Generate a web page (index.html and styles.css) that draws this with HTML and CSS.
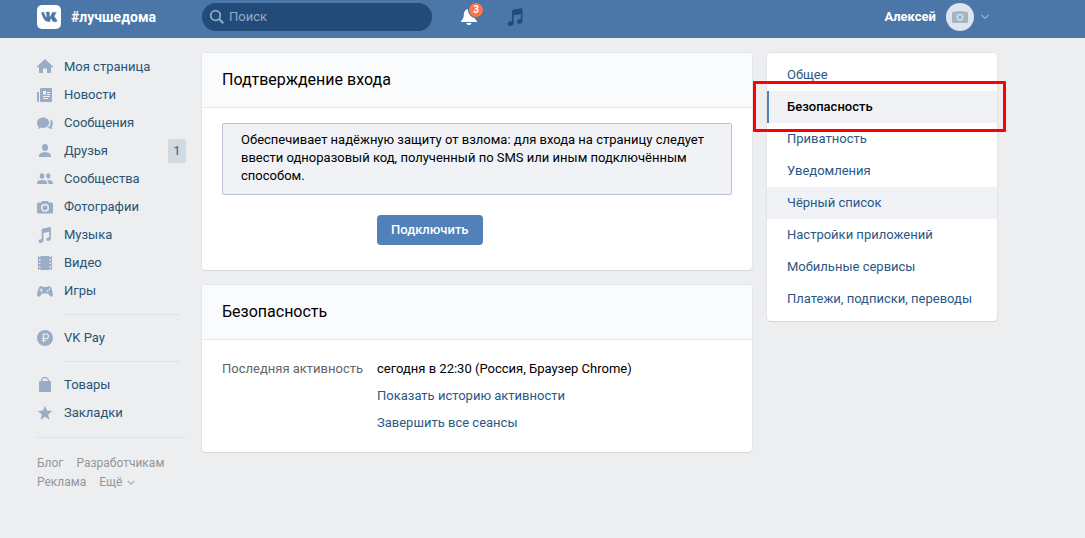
FILE: index.html
```html
<!DOCTYPE html>
<html lang="ru">
<head>
<meta charset="utf-8">
<title>Безопасность</title>
<link rel="stylesheet" href="styles.css">
</head>
<body>
<header class="topbar">
  <a class="brand" href="#">
    <svg class="logo" viewBox="0 0 24 24" aria-hidden="true"><rect width="24" height="24" rx="5" fill="#fff"/><path fill="#4a76a8" stroke="#4a76a8" stroke-width=".5" d="M11.3 17h1.1s.4 0 .5-.3c.2-.2.1-.7.1-.7s0-2 .9-2.300c.9-.3 2 2 3.200 2.800.9.600 1.600.500 1.600.500h3.100s1.600-.1.800-1.400c-.1-.1-.5-1-2.400-2.700-2-1.900-1.700-1.600.7-4.700C22.300 6.300 23 7 19.900 7h-3.300s-.3 0-.5.1c-.2.100-.3.400-.3.400s-.5 1.300-1.200 2.400c-1.400 2.400-2 2.500-2.200 2.300-.500-.3-.4-1.300-.4-2.100 0-2.300.3-3.200-.7-3.400-.3-.1-.6-.1-1.400-.1-1.100 0-2 0-2.500.3-.4.200-.600.500-.4.600.2 0 .6.100.900.500.3.400.3 1.400.3 1.400s.2 2.700-.4 3c-.400.200-1-.2-2.200-2.400C5 8.900 4.500 7.600 4.500 7.600s-.1-.2-.3-.4C4 7.100 3.700 7 3.700 7H1.300s-.5 0-.6.200c-.2.200 0 .500 0 .500s2.300 5.100 4.800 7.600C7.800 17.200 11.300 17 11.300 17z" transform="matrix(.7 0 0 .92 4 1)"/></svg>
    <span>#лучшедома</span>
  </a>
  <div class="topbar-main">
    <label class="search">
      <svg viewBox="0 0 16 16" aria-hidden="true"><circle cx="6.500" cy="6.500" r="4.800" fill="none" stroke="#8fadc8" stroke-width="1.800"/><path d="M10 10l4.300 4.300" stroke="#8fadc8" stroke-width="2"/></svg>
      <input type="search" placeholder="Поиск" aria-label="Поиск">
    </label>
    <button class="top-btn bell" aria-label="Уведомления">
      <svg viewBox="0 0 18 18" aria-hidden="true"><path fill="#fff" d="M8 1c-3 .5-4 3-4.200 6C3.700 9.500 3 11 1.200 12.800V14h15.600v-1.200C14.800 11.200 14 9.500 14 7 13.500 4 12 1 8 1zM6.300 15h5.200c-.5 1.400-1.400 2-2.600 2s-2.100-.6-2.600-2z"/></svg>
      <span class="count">3</span>
    </button>
    <button class="top-btn" aria-label="Музыка">
      <svg viewBox="0 0 18 18" aria-hidden="true"><path fill="#224b7a" d="M6 2.800c0-.6.400-1 1-1.100L15.500.3c.600-.1 1 .2 1 .8v11.300c0 2-1.300 3.400-3.200 3.400-1.500 0-2.400-.8-2.400-2 0-1.500 1.100-2.500 2.900-2.600h1V6L7.700 7.200v7.200c0 2-1.400 3.500-3.400 3.500-1.500 0-2.500-.8-2.500-2 0-1.500 1.200-2.500 2.900-2.600H6z"/></svg>
    </button>
  </div>
  <button class="profile">
    <span>Алексей</span>
    <svg class="avatar" viewBox="0 0 28 28" aria-hidden="true"><circle cx="14" cy="14" r="14" fill="#dfe5ed"/><path fill="#a3b5c8" d="M7 8.800h3L11 8h6l1 .8h3a1 1 0 0 1 1 1V19a1 1 0 0 1-1 1H7a1 1 0 0 1-1-1V9.800a1 1 0 0 1 1-1z"/><circle cx="14" cy="14.300" r="2.800" fill="none" stroke="#dfe5ed" stroke-width="1.200"/></svg>
    <svg class="chevron" viewBox="0 0 8 6" aria-hidden="true"><path d="M.5 1L4 4.300 7.500 1" fill="none" stroke="#8fadc8" stroke-width="1.400"/></svg>
  </button>
</header>

<div class="page">
  <nav class="sidebar" aria-label="Меню">
    <a class="nav-item" href="#"><svg viewBox="0 0 16 16"><path d="M8 0l8 7.500v.8h-2v5.200a.5.500 0 0 1-.5.500H10V9.500H6V14H2.500a.5.500 0 0 1-.5-.5V8.300H0v-.8z"/></svg>Моя страница</a>
    <a class="nav-item" href="#"><svg viewBox="0 0 16 16"><path fill-rule="evenodd" d="M4 1h10a1 1 0 0 1 1 1v12a1 1 0 0 1-1 1H4a1 1 0 0 1-1-1V2a1 1 0 0 1 1-1zM6 4v3.500h3V4zm4 1v1h3V5zm0 2v1h3V7zM6 9v1h7V9zm0 2v1h5v-1zM0 5h2v10H1a1 1 0 0 1-1-1z"/></svg>Новости</a>
    <a class="nav-item" href="#"><svg viewBox="0 0 16 16"><path d="M6 2.500c3.500 0 6.200 2.300 6.200 5.200S9.500 12.900 6 12.900c-.9 0-1.700-.1-2.400-.4-.7.900-1.600 1.300-2.900 1.300.6-.7.900-1.600.9-2.400C.6 10.600 0 9.200 0 7.700c0-2.900 2.500-5.200 6-5.200zM13 4.200c1.800.8 3 2.200 3 4 0 1.300-.5 2.500-1.400 3.300 0 .900.300 1.700.8 2.400-1.200 0-2-.4-2.700-1-.8.300-1.700.4-2.700.2 2.300-1 3.500-2.900 3.500-5.200 0-1.300-.2-2.600-.5-3.700z"/></svg>Сообщения</a>
    <a class="nav-item" href="#"><svg viewBox="0 0 16 16"><ellipse cx="8" cy="4.500" rx="3" ry="3.500"/><path d="M2 13.500c0-3 2.200-4.200 6-4.200s6 1.200 6 4.200a.6.600 0 0 1-.6.500H2.600a.6.600 0 0 1-.6-.5z"/></svg>Друзья<span class="badge">1</span></a>
    <a class="nav-item" href="#"><svg viewBox="0 0 16 16"><ellipse cx="5" cy="5" rx="2.300" ry="2.800"/><ellipse cx="11.300" cy="5" rx="2.100" ry="2.700"/><path d="M0 12.500C0 9.800 1.800 9 5 9s5.200.8 5.200 3.500v.5H0zM9.700 9c3.800-.4 6.300.3 6.300 3.500v.5h-4.500c0-2-.4-3.200-1.800-4z"/></svg>Сообщества</a>
    <a class="nav-item" href="#"><svg viewBox="0 0 16 16"><path fill-rule="evenodd" d="M1.500 3.500H4L5.300 2h5.400L12 3.500h2.500A1.500 1.500 0 0 1 16 5v8a1.500 1.500 0 0 1-1.500 1.500h-13A1.500 1.500 0 0 1 0 13V5a1.500 1.500 0 0 1 1.500-1.500zM8 4.800a4 4 0 1 0 0 8 4 4 0 0 0 0-8zm0 1.500a2.500 2.500 0 1 1 0 5 2.500 2.500 0 0 1 0-5z"/></svg>Фотографии</a>
    <a class="nav-item" href="#"><svg viewBox="0 0 16 16"><path d="M4.700 2.600c0-.5.300-.8.800-.9L13 .1c.5-.1.900.1.900.6v10.600c0 1.700-1 2.700-2.600 2.700-1.200 0-1.900-.6-1.900-1.600 0-1.200.9-2 2.300-2.100h.5V4.700L6.500 6v7.300c0 1.700-1.100 2.700-2.800 2.700-1.300 0-2.200-.6-2.200-1.700 0-1.200.9-1.900 2.300-2h.9z"/></svg>Музыка</a>
    <a class="nav-item" href="#"><svg viewBox="0 0 16 16"><path fill-rule="evenodd" d="M1 1h1v1h1.500V1h9v1H14V1h1v14h-1v-1h-1.500v1h-9v-1H2v1H1zm1 3v1.500h1.500V4zm0 3.500V9h1.500V7.500zM2 11v1.500h1.500V11zm10.500-7v1.500H14V4zm0 3.500V9H14V7.500zm0 3.500v1.500H14V11z"/></svg>Видео</a>
    <a class="nav-item" href="#"><svg viewBox="0 0 16 16"><path fill-rule="evenodd" d="M4 3c1 0 1.500 1 2.300 1h3.400C10.500 4 11 3 12 3c2.200 0 3.200 4 3.900 8.500.3 2-1.600 3.200-3 1.500L11 10.500H5L3.100 13C1.700 14.700-.2 13.500.1 11.500.8 7 1.800 3 4 3zm-.3 2.500v1H2.500v1h1.200v1.200h1V7.500H6v-1H4.700v-1zm8.500.1a.8.800 0 1 0 0 1.600.8.800 0 0 0 0-1.600zm-1.700 1.700a.8.800 0 1 0 0 1.600.8.800 0 0 0 0-1.600z"/></svg>Игры</a>
    <hr class="nav-rule">
    <a class="nav-item" href="#"><svg viewBox="0 0 16 16"><circle cx="8" cy="8" r="8"/><path d="M6.500 12.500V4h2.700a2.200 2.200 0 0 1 0 4.500H5M5 10.500h4.500" fill="none" stroke="#edeef0" stroke-width="1.200"/></svg>VK Pay</a>
    <hr class="nav-rule">
    <a class="nav-item" href="#"><svg viewBox="0 0 16 16"><path d="M3 4h10a1 1 0 0 1 1 1v9a1 1 0 0 1-1 1H3a1 1 0 0 1-1-1V5a1 1 0 0 1 1-1z"/><path d="M4.500 5V4a3.500 3.500 0 0 1 7 0v1" fill="none" stroke="#99aec6" stroke-width="1.300"/></svg>Товары</a>
    <a class="nav-item" href="#"><svg viewBox="0 0 16 16"><path d="M8 .7l2 4.900 5.200.4-4 3.400 1.300 5.300L8 11.800l-4.500 2.900 1.300-5.300L.8 6 6 5.600z"/></svg>Закладки</a>
    <div class="nav-footer">
      <a href="#">Блог</a><a href="#">Разработчикам</a><a href="#">Реклама</a><a href="#">Ещё <svg class="more" viewBox="0 0 8 6"><path d="M.8 1L4 4.200 7.200 1" fill="none" stroke="#adb2b8" stroke-width="1.300"/></svg></a>
    </div>
  </nav>

  <main class="content">
    <section class="card">
      <h2 class="card-title">Подтверждение входа</h2>
      <div class="confirm">
        <p class="notice">Обеспечивает надёжную защиту от взлома: для входа на страницу следует ввести одноразовый код, полученный по SMS или иным подключённым способом.</p>
        <button class="primary">Подключить</button>
      </div>
    </section>
    <section class="card">
      <h2 class="card-title">Безопасность</h2>
      <dl class="activity">
        <dt>Последняя активность</dt>
        <dd>сегодня в 22:30 (Россия, Браузер Chrome)</dd>
        <dd><a href="#">Показать историю активности</a></dd>
        <dd><a href="#">Завершить все сеансы</a></dd>
      </dl>
    </section>
  </main>

  <nav class="card settings" aria-label="Настройки">
    <a href="#">Общее</a>
    <a class="current" href="#" aria-current="page">Безопасность</a>
    <a href="#">Приватность</a>
    <a href="#">Уведомления</a>
    <a class="hovered" href="#">Чёрный список</a>
    <a href="#">Настройки приложений</a>
    <a href="#">Мобильные сервисы</a>
    <a href="#">Платежи, подписки, переводы</a>
  </nav>
</div>
</body>
</html>
```

FILE: styles.css
```css
* { box-sizing: border-box; }
body {
  margin: 0;
  background: #edeef0;
  color: #000;
  font: 13px/18px Roboto, "Open Sans", sans-serif;
}
a { color: #2a5885; text-decoration: none; }
button, input { font: inherit; border: 0; padding: 0; background: none; }
button { cursor: pointer; }
svg { display: block; flex: none; }

.topbar {
  display: flex;
  align-items: center;
  height: 38px;
  padding: 0 96px 4px 37px;
  background: #4a76a8;
  border-bottom: 1px solid #4571a3;
}
.brand {
  display: flex;
  align-items: center;
  gap: 10px;
  width: 165px;
  color: #fff;
  font-size: 14px;
  font-weight: 700;
}
.logo { width: 24px; height: 24px; }
.topbar-main { display: flex; flex: 1; align-items: center; }
.search {
  display: flex;
  align-items: center;
  gap: 4px;
  width: 230px;
  height: 28px;
  padding: 0 7px;
  border-radius: 14px;
  background: #224b7a;
}
.search svg { width: 16px; height: 16px; }
.search input { flex: 1; min-width: 0; color: #fff; outline: 0; }
.search input::placeholder { color: #8fadc8; opacity: 1; }
.top-btn { position: relative; margin-left: 28px; }
.top-btn svg { width: 18px; height: 18px; }
.count {
  position: absolute;
  top: -5px;
  right: -5px;
  width: 14px;
  height: 14px;
  border-radius: 7px;
  box-shadow: 0 0 0 1px #4a76a8;
  background: #ff734c;
  color: #fff;
  font: 700 10px/14px Roboto, sans-serif;
  text-align: center;
}
.profile {
  display: flex;
  align-items: center;
  gap: 10px;
  color: #fff;
  font-weight: 700;
}
.avatar { width: 28px; height: 28px; }
.chevron { width: 8px; height: 6px; margin-left: -3px; }

.page {
  display: flex;
  align-items: flex-start;
  gap: 15px;
  padding: 15px 88px 15px 37px;
}
.sidebar { width: 150px; flex: none; }
.nav-item {
  display: flex;
  align-items: center;
  gap: 11px;
  height: 28px;
  color: #285473;
}
.nav-item svg { width: 16px; height: 16px; fill: #99aec6; }
.badge {
  min-width: 18px;
  margin: 0 1px 0 auto;
  border-radius: 2px;
  background: #d1d9e1;
  color: #55677d;
  font-size: 12px;
  font-weight: 500;
  line-height: 24px;
  text-align: center;
}
.nav-rule {
  height: 1px;
  margin: 9px 7px 9px 27px;
  border: 0;
  background: #dfe1e8;
}
.nav-footer {
  display: flex;
  flex-wrap: wrap;
  column-gap: 13px;
  margin: 10px 1px 0 0;
  padding-top: 16px;
  border-top: 1px solid #dfe1e5;
  font-size: 12px;
  line-height: 19px;
}
.nav-footer a { color: #939699; }
.more { display: inline-block; width: 8px; height: 6px; margin-left: 2px; }

.content { display: grid; flex: 1; gap: 15px; min-width: 0; }
.card {
  border-radius: 4px;
  background: #fff;
  box-shadow: 0 1px 0 0 #d7d8db, 0 0 0 1px #e3e4e8;
}
.card-title {
  margin: 0;
  padding: 0 20px;
  border-bottom: 1px solid #e7e8ec;
  border-radius: 4px 4px 0 0;
  background: #fafbfc;
  font-size: 16px;
  font-weight: 400;
  line-height: 54px;
}
.confirm { padding: 15px 20px 25px; }
.notice {
  margin: 0 0 20px;
  padding: 7px 18px 9px;
  border: 1px solid #bac3d4;
  border-radius: 2px;
  background: #f0f2f5;
}
.primary {
  display: block;
  height: 30px;
  margin-left: 155px;
  padding: 0 14px;
  border-radius: 4px;
  background: #5181b8;
  color: #fff;
  font-weight: 500;
}
.activity {
  display: grid;
  grid-template-columns: 155px 1fr;
  row-gap: 9px;
  margin: 0;
  padding: 20px;
}
.activity dt { color: #656565; }
.activity dd { grid-column: 2; margin: 0; }

.settings { width: 230px; flex: none; padding: 6px 0; }
.settings a { display: block; padding: 0 20px; line-height: 32px; }
.settings .hovered { background: #f0f2f5; }
.settings .current {
  position: relative;
  padding-left: 18px;
  border-left: 2px solid #5181b8;
  background: #f0f2f5;
  color: #000;
  font-weight: 500;
}
.settings .current::after {
  content: "";
  position: absolute;
  inset: -10px -9px -9px -16px;
  border: 3px solid #f00;
  border-radius: 1px;
}
```
